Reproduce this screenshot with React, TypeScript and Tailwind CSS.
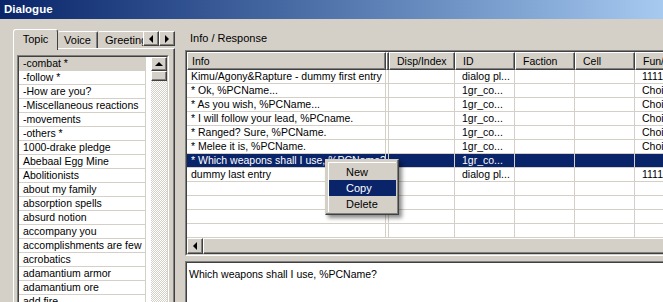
const topics = [
  "-combat *",
  "-follow *",
  "-How are you?",
  "-Miscellaneous reactions",
  "-movements",
  "-others *",
  "1000-drake pledge",
  "Abebaal Egg Mine",
  "Abolitionists",
  "about my family",
  "absorption spells",
  "absurd notion",
  "accompany you",
  "accomplishments are few",
  "acrobatics",
  "adamantium armor",
  "adamantium ore",
  "add fire",
];

const columns = [
  { label: "Info", width: "w-[199px]", pad: "pl-[4px]" },
  { label: "", width: "w-[3px]", pad: "" },
  { label: "Disp/Index", width: "w-[66px]", pad: "pl-[7px]" },
  { label: "ID", width: "w-[60px]", pad: "pl-[7px]" },
  { label: "Faction", width: "w-[60px]", pad: "pl-[7px]" },
  { label: "Cell", width: "w-[60px]", pad: "pl-[7px]" },
  { label: "Fun/Arg", width: "w-[80px]", pad: "pl-[7px]" },
];

const infos = [
  ["Kimu/Agony&Rapture - dummy first entry", "", "", "dialog pl...", "", "", "1111111"],
  ["* Ok, %PCName...", "", "", "1gr_co...", "", "", "Choice 1"],
  ["* As you wish, %PCName...", "", "", "1gr_co...", "", "", "Choice 2"],
  ["* I will follow your lead, %PCname.", "", "", "1gr_co...", "", "", "Choice 3"],
  ["* Ranged? Sure, %PCName.", "", "", "1gr_co...", "", "", "Choice 1"],
  ["* Melee it is, %PCName.", "", "", "1gr_co...", "", "", "Choice 2"],
  ["* Which weapons shall I use, %PCName?", "", "", "1gr_co...", "", "", ""],
  ["dummy last entry", "", "", "dialog pl...", "", "", "1111111"],
  ["", "", "", "", "", "", ""],
  ["", "", "", "", "", "", ""],
  ["", "", "", "", "", "", ""],
  ["", "", "", "", "", "", ""],
];

const raised =
  "border border-t-white border-l-white border-r-[#404040] border-b-[#404040] bg-[#d4d0c8] shadow-[inset_-1px_-1px_#808080]";

function Sunken({ className = "", children }: { className?: string; children?: React.ReactNode }) {
  return (
    <div className={`border border-t-[#808080] border-l-[#808080] border-r-white border-b-white ${className}`}>
      <div className="h-full overflow-hidden border border-t-[#404040] border-l-[#404040] border-r-[#d4d0c8] border-b-[#d4d0c8] bg-white">
        {children}
      </div>
    </div>
  );
}

function ArrowButton({ dir, className = "" }: { dir: "left" | "right" | "up"; className?: string }) {
  return (
    <div className={`flex items-center justify-center ${raised} ${className}`}>
      {dir === "left" && <span className="h-0 w-0 border-y-[4px] border-r-[4px] border-y-transparent border-r-black" />}
      {dir === "right" && <span className="h-0 w-0 border-y-[4px] border-l-[4px] border-y-transparent border-l-black" />}
      {dir === "up" && <span className="h-0 w-0 border-x-[4px] border-b-[4px] border-x-transparent border-b-black" />}
    </div>
  );
}

function TopicPanel() {
  return (
    <div className="ml-[13px] flex w-[162px] shrink-0 flex-col">
      <div className="relative z-10 flex h-[19px] shrink-0 items-end">
        <div className="-mb-[2px] flex h-[21px] w-[45px] items-center justify-center rounded-t-[3px] border-l border-r border-t border-l-white border-r-[#404040] border-t-white bg-[#d4d0c8] pb-[2px] text-[11px]">
          Topic
        </div>
        <div className="flex h-[17px] w-[40px] items-center justify-center rounded-t-[2px] border-r border-t border-r-[#404040] border-t-white shadow-[inset_-1px_0_#808080] text-[11px]">
          Voice
        </div>
        <div className="flex h-[17px] w-[60px] items-center overflow-hidden rounded-t-[2px] border-t border-t-white pl-[7px] text-[11px]">
          Greeting
        </div>
        <div className="absolute right-0 top-[2px] flex">
          <ArrowButton dir="left" className="h-[15px] w-[16px]" />
          <ArrowButton dir="right" className="h-[15px] w-[16px]" />
        </div>
      </div>
      <div className="h-[270px] shrink-0 border-l border-t border-r border-l-white border-t-white border-r-[#404040] pl-[3px] pr-[4px] pt-[6px] shadow-[inset_-1px_0_#808080]">
        <Sunken className="h-[262px] w-[152px]">
          <div className="flex h-full">
            <div className="w-[127px] shrink-0">
              {topics.map((t, i) => (
                <div
                  key={t}
                  className={`flex h-[14px] items-center whitespace-nowrap border-b border-r border-[#d4d0c8] pl-[4px] ${i === 0 ? "bg-[#d4d0c8]" : ""}`}
                >
                  {t}
                </div>
              ))}
            </div>
            <div className="ml-auto flex w-[16px] flex-col bg-[repeating-conic-gradient(#d4d0c8_0_25%,#ffffff_0_50%)] bg-[length:2px_2px]">
              <ArrowButton dir="up" className="h-[14px]" />
              <div className={`h-[10px] ${raised}`} />
            </div>
          </div>
        </Sunken>
      </div>
    </div>
  );
}

function ResponsePanel() {
  return (
    <div className="ml-[10px] flex w-[490px] shrink-0 flex-col">
      <div className="flex h-[21px] shrink-0 items-center pb-[3px] pl-[5px] text-[11px]">Info / Response</div>
      <Sunken className="relative h-[206px] shrink-0">
        <div className="flex h-[18px]">
          {columns.map((c, i) => (
            <div key={i} className={`flex shrink-0 items-center whitespace-nowrap ${c.width} ${c.pad} ${raised}`}>
              {c.label}
            </div>
          ))}
        </div>
        {infos.map((row, r) => {
          const selected = r === 6;
          return (
            <div key={r} className={`flex h-[14px] ${selected ? "bg-[#0a246a] text-white" : ""}`}>
              {row.map((cell, c) => (
                <div
                  key={c}
                  className={`flex shrink-0 items-center overflow-hidden whitespace-nowrap border-b border-r border-[#d4d0c8] ${columns[c].width} ${columns[c].pad}`}
                >
                  {cell}
                </div>
              ))}
            </div>
          );
        })}
        <div className="flex h-[16px]">
          <ArrowButton dir="left" className="w-[16px]" />
          <div className={`flex-1 ${raised}`} />
        </div>
      </Sunken>
      <Sunken className="mt-[5px] h-[60px] shrink-0">
        <div className="pl-[2px] pt-[6px]">Which weapons shall I use, %PCName?</div>
      </Sunken>
    </div>
  );
}

function ContextMenu() {
  return (
    <div
      className={`absolute left-[325px] top-[159px] w-[74px] p-[2px] shadow-[inset_-1px_-1px_#808080,3px_3px_4px_rgba(0,0,0,0.45)] border border-t-[#d4d0c8] border-l-[#d4d0c8] border-r-[#404040] border-b-[#404040] bg-[#d4d0c8]`}
    >
      <div className="border-l border-t border-white pt-px">
        {["New", "Copy", "Delete"].map((item) => (
          <div
            key={item}
            className={`flex h-[16px] items-center pl-[17px] text-[11px] ${item === "Copy" ? "bg-[#0a246a] text-white" : ""}`}
          >
            {item}
          </div>
        ))}
      </div>
    </div>
  );
}

export default function App() {
  return (
    <div className="relative flex h-[302px] w-[663px] flex-col overflow-hidden bg-[#d4d0c8] font-['Liberation_Sans',Arial,sans-serif] text-[10.5px] leading-none text-black">
      <div className="flex h-[19px] shrink-0 items-center bg-gradient-to-r from-[#0a246a] to-[#a6caf0] pl-[4px] text-[11.5px] font-bold text-white">
        Dialogue
      </div>
      <div className="flex min-h-0 flex-1 pt-[10px]">
        <TopicPanel />
        <ResponsePanel />
      </div>
      <ContextMenu />
    </div>
  );
}
